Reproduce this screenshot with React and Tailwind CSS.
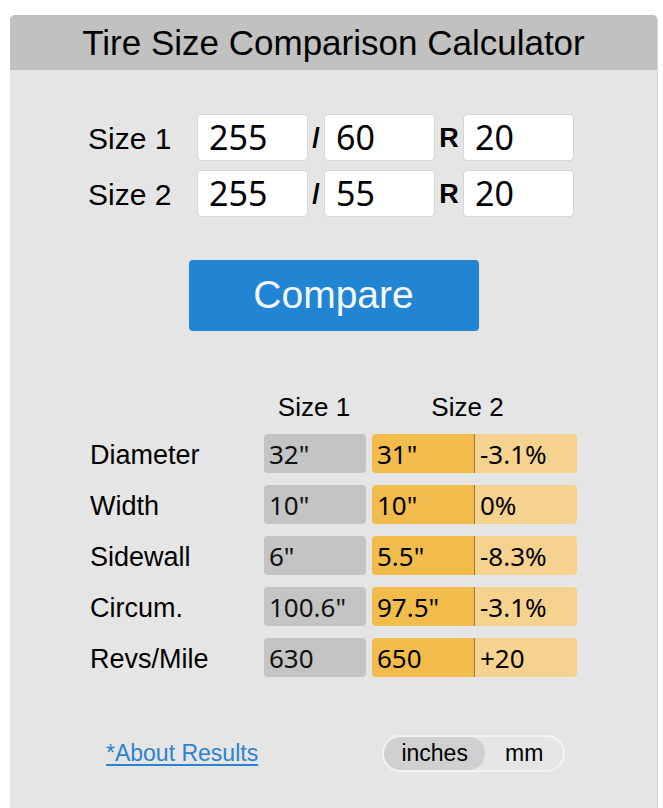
import React, { useState } from 'react'

const ROWS = [
  { label: 'Diameter', a: '32"', b: '31"', diff: '-3.1%' },
  { label: 'Width', a: '10"', b: '10"', diff: '0%' },
  { label: 'Sidewall', a: '6"', b: '5.5"', diff: '-8.3%' },
  { label: 'Circum.', a: '100.6"', b: '97.5"', diff: '-3.1%' },
  { label: 'Revs/Mile', a: '630', b: '650', diff: '+20' },
]

const arial = "font-['Liberation_Sans',Arial,sans-serif]"
const sego = "font-['Noto_Sans','Open_Sans',sans-serif]"

function SizeInput({ value }) {
  return (
    <input
      defaultValue={value}
      className={`h-[47px] w-[111px] rounded-[4px] border border-[#d6d6d6] bg-white pl-[11px] text-[34px] text-black outline-none ${sego}`}
    />
  )
}

function SizeRow({ label, width, aspect, rim }) {
  return (
    <div className="flex items-center">
      <span className={`w-[109px] pt-[2px] text-[30px] text-black ${arial}`}>{label}</span>
      <SizeInput value={width} />
      <span className={`w-[16px] pt-[2px] text-center text-[27px] font-bold text-black ${arial}`}>/</span>
      <SizeInput value={aspect} />
      <span className={`w-[28px] pt-[2px] text-center text-[27px] font-bold text-black ${arial}`}>R</span>
      <SizeInput value={rim} />
    </div>
  )
}

export default function App() {
  const [unit, setUnit] = useState('inches')

  return (
    <div className="min-h-[808px] bg-white pt-[15px] pl-[10px] pr-[5px]">
      <div className="flex min-h-[793px] flex-col overflow-hidden rounded-t-[5px] border-r border-[#d4d4d4] bg-[#e5e5e5]">
        <div className={`flex h-[55px] items-center justify-center bg-[#c1c1c1] pt-[2px] text-[35px] text-black ${arial}`}>
          Tire Size Comparison Calculator
        </div>

        {/* tire size inputs */}
        <div className="mt-[44px] flex flex-col gap-[9px] pl-[78px]">
          <SizeRow label="Size 1" width="255" aspect="60" rim="20" />
          <SizeRow label="Size 2" width="255" aspect="55" rim="20" />
        </div>

        <div className="mt-[43px] flex justify-center">
          <button className={`h-[71px] w-[290px] rounded-[4px] bg-[#2185d4] text-[39px] text-[#f4f8fc] ${arial}`}>
            Compare
          </button>
        </div>

        {/* results table */}
        <div className="mt-[60px] pl-[80px]">
          <div className={`flex h-[32px] items-center text-[26px] text-black ${arial}`}>
            <span className="w-[174px]" />
            <span className="w-[100px] text-center">Size 1</span>
            <span className="w-[6px]" />
            <span className="w-[195px] text-center">Size 2</span>
          </div>
          <div className="mt-[11px] flex flex-col gap-[12px]">
            {ROWS.map((r) => (
              <div key={r.label} className="flex h-[39px] items-center">
                <span className={`w-[174px] pt-[3px] text-[27px] text-black ${arial}`}>{r.label}</span>
                <span className={`flex h-full w-[102px] items-center rounded-[4px] bg-[#c4c4c4] pl-[5px] pt-[1px] text-[26px] text-[#111] ${sego}`}>
                  {r.a}
                </span>
                <span className="w-[6px]" />
                <span className={`flex h-full w-[103px] items-center rounded-l-[4px] border-r border-[#9a7a3a] bg-[#f2bc4c] pl-[5px] pt-[1px] text-[26px] text-black ${sego}`}>
                  {r.b}
                </span>
                <span className={`flex h-full w-[102px] items-center rounded-r-[4px] bg-[#f5d38f] pl-[5px] pt-[1px] text-[26px] text-black ${sego}`}>
                  {r.diff}
                </span>
              </div>
            ))}
          </div>
        </div>

        {/* footer: about link + unit toggle */}
        <div className="mt-[58px] flex items-center pl-[96px]">
          <a href="#" className={`text-[23px] text-[#2b82d0] underline underline-offset-[3px] ${arial}`}>
            *About Results
          </a>
          <div className="ml-[124px] flex h-[37px] w-[183px] items-center rounded-full border-2 border-[#f3f3f3]">
            {['inches', 'mm'].map((u) => (
              <button
                key={u}
                onClick={() => setUnit(u)}
                className={`flex h-full items-center justify-center rounded-full text-[23px] text-black ${arial} ${
                  u === 'inches' ? 'w-[101px]' : 'w-[78px]'
                } ${unit === u ? 'bg-[#d0d0d0]' : ''}`}
              >
                {u}
              </button>
            ))}
          </div>
        </div>
      </div>
    </div>
  )
}
